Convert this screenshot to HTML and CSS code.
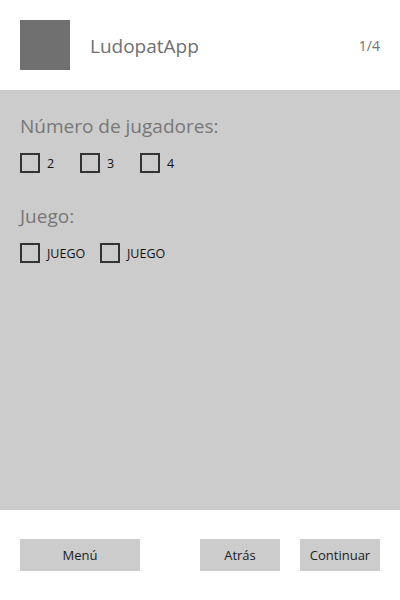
FILE: index.html
```html
<!DOCTYPE html>
<html lang="es">
<head>
<meta charset="utf-8">
<title>LudopatApp</title>
<link rel="stylesheet" href="styles.css">
</head>
<body>
<div class="app">
  <header class="header">
    <div class="logo"></div>
    <div class="title">LudopatApp</div>
    <div class="pager">1/4</div>
  </header>
  <main class="panel">
    <section class="section">
      <h2 class="section-title">Número de jugadores:</h2>
      <div class="options">
        <label class="option option-num"><span class="box"></span><span class="opt-label">2</span></label>
        <label class="option option-num"><span class="box"></span><span class="opt-label">3</span></label>
        <label class="option option-num"><span class="box"></span><span class="opt-label">4</span></label>
      </div>
    </section>
    <section class="section">
      <h2 class="section-title">Juego:</h2>
      <div class="options">
        <label class="option option-game"><span class="box"></span><span class="opt-label">JUEGO</span></label>
        <label class="option option-game"><span class="box"></span><span class="opt-label">JUEGO</span></label>
      </div>
    </section>
  </main>
  <footer class="footer">
    <button class="btn btn-wide">Menú</button>
    <div class="spacer"></div>
    <button class="btn">Atrás</button>
    <button class="btn">Continuar</button>
  </footer>
</div>
</body>
</html>
```
FILE: styles.css
```css
* { box-sizing: border-box; }
html, body { margin: 0; padding: 0; background: #ffffff; }
body {
  font-family: "Open Sans", "Noto Sans", sans-serif;
  width: 400px;
  height: 600px;
}
.app {
  display: flex;
  flex-direction: column;
  height: 600px;
}
.header {
  height: 90px;
  display: flex;
  align-items: center;
  padding: 0 20px;
}
.logo {
  width: 50px;
  height: 50px;
  background: #707070;
  margin-right: 20px;
}
.title {
  flex: 1;
  font-size: 19px;
  color: #707070;
  padding-top: 2px;
}
.pager {
  font-size: 14px;
  color: #707070;
}
.panel {
  height: 420px;
  background: #cccccc;
  padding: 20px 20px 0;
}
.section {
  height: 90px;
}
.section-title {
  margin: 0;
  font-weight: normal;
  font-size: 19px;
  line-height: 32px;
  color: #777777;
}
.options {
  display: flex;
  gap: 12px;
  margin-top: 11px;
}
.option {
  display: flex;
  align-items: center;
}
.option-num { width: 48px; }
.option-game { width: 68px; }
.box {
  width: 20px;
  height: 20px;
  border: 2px solid #333333;
  margin-right: 7px;
  flex: none;
}
.opt-label {
  font-size: 12.5px;
  color: #111111;
}
.footer {
  flex: 1;
  display: flex;
  align-items: center;
  padding: 0 20px;
  gap: 20px;
}
.spacer { flex: 1; }
.btn {
  width: 80px;
  height: 32px;
  border: none;
  background: #cccccc;
  font-family: inherit;
  font-size: 13px;
  color: #222222;
  padding: 0;
}
.btn-wide { width: 120px; }
```
